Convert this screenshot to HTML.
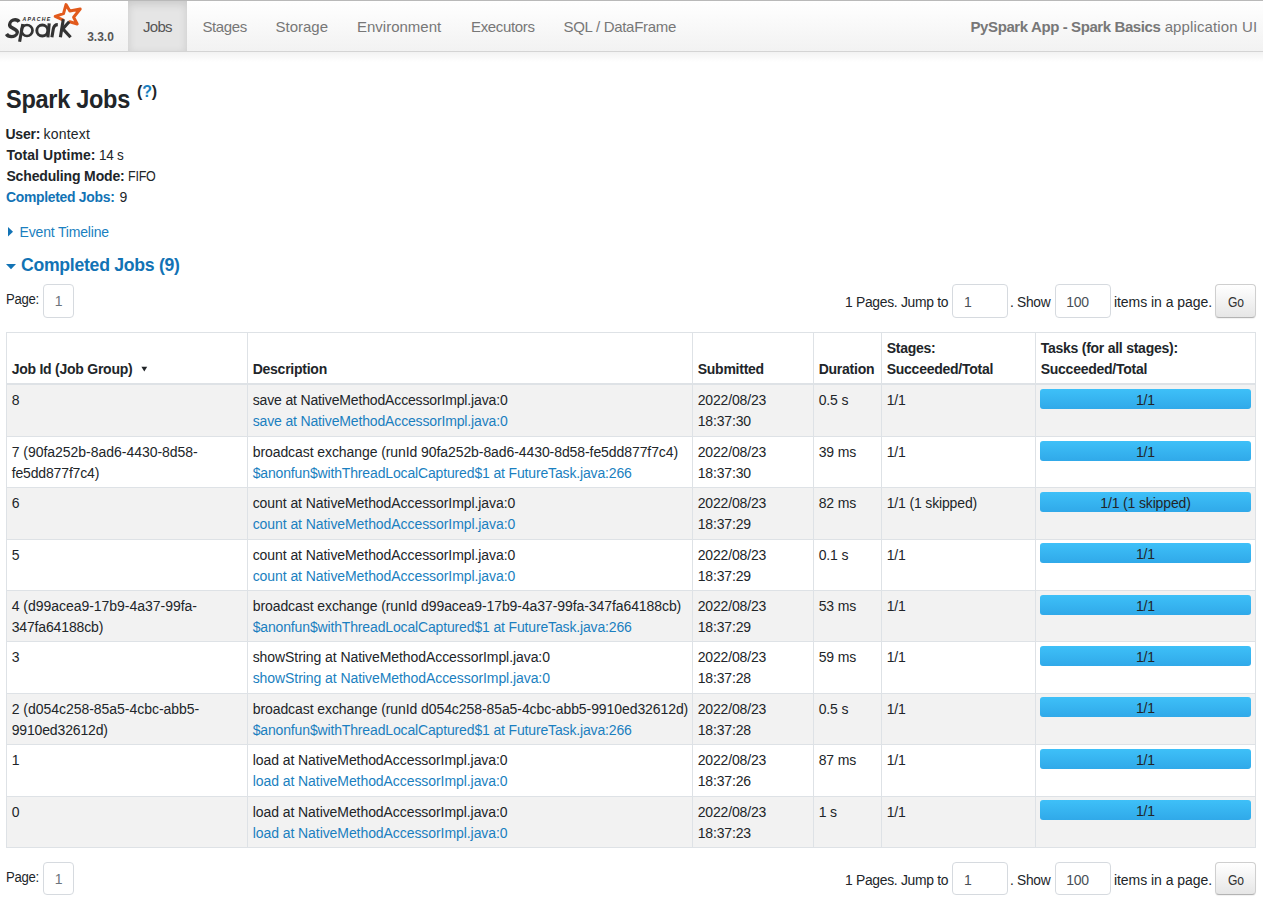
<!DOCTYPE html>
<html><head><meta charset="utf-8">
<style>
html,body{margin:0;padding:0;background:#fff;}
body{width:1263px;height:919px;overflow:hidden;position:relative;font-family:"Liberation Sans",sans-serif;font-size:14px;line-height:21px;color:#212529;}
a{color:#1a7fc0;text-decoration:none;}
.abs{position:absolute;white-space:nowrap;}
.nav{position:absolute;left:0;top:0;width:1263px;height:52px;background:linear-gradient(#ffffff,#f2f2f2);border-top:1px solid #b9b9b9;border-bottom:1px solid #d4d4d4;box-sizing:border-box;}
.navshadow{position:absolute;left:0;top:52px;width:1263px;height:10px;background:linear-gradient(rgba(0,0,0,0.05),rgba(0,0,0,0));}
.tab{position:absolute;top:2px;height:50px;font-size:15px;line-height:50px;color:#777;white-space:nowrap;}
.active{position:absolute;left:128px;top:1px;width:59px;height:50px;background:#e5e5e5;box-shadow:inset 0 3px 8px rgba(0,0,0,0.125);}
.apptitle{position:absolute;top:2px;left:970.5px;height:50px;line-height:50px;font-size:15px;color:#777;white-space:nowrap;}
.pinput{position:absolute;box-sizing:border-box;border:1px solid #d6dadf;border-radius:4px;background:#fff;}
.gobtn{position:absolute;box-sizing:border-box;border:1px solid #cfcfcf;border-bottom-color:#b3b3b3;border-radius:4px;background:linear-gradient(#ffffff,#e6e6e6);box-shadow:0 1px 1px rgba(0,0,0,0.06);}
table.jobs{position:absolute;left:6px;top:332px;border-collapse:collapse;table-layout:fixed;width:1250px;}
table.jobs th, table.jobs td{border:1px solid #dee2e6;padding:5.05px 4.2px 3.35px 4.7px;vertical-align:top;text-align:left;overflow:hidden;white-space:nowrap;line-height:21px;letter-spacing:-0.15px;}
table.jobs th{vertical-align:bottom;border-bottom:2px solid #dee2e6;font-weight:bold;letter-spacing:-0.25px;padding-top:5.2px;padding-bottom:3.2px;}
table.jobs tbody tr:nth-child(odd) td{background:#f2f2f2;}
.prog{position:relative;top:-1.3px;margin-left:-0.5px;height:20px;border-radius:3px;background:linear-gradient(#3ec0f8,#30a9e9);text-align:center;font-size:14px;line-height:22px;color:#212529;overflow:visible;}
</style></head>
<body>
<div class="nav"></div>
<div class="navshadow"></div>
<div class="active"></div>


<svg class="abs" style="left:0;top:0" width="125" height="51" viewBox="0 0 125 51">
 <g fill="none" stroke="#e25a1c" stroke-width="3" stroke-linejoin="round" stroke-linecap="round">
  <polyline points="62.8,19.8 55.2,16.4 63.5,13.6 66.0,4.6 69.8,11.0 80.2,9.0 73.6,17.2 77.2,24.0 69.8,21.8"/>
 </g>
 <g fill="none" stroke="#333" stroke-width="3.1">
  <g transform="translate(0,37) skewX(-10) translate(0,-37)">
  <path stroke-width="3.3" d="M 16.34 21.89 C 15.31 20.50 13.66 19.75 11.81 19.75 C 9.13 19.75 7.38 21.67 7.38 24.13 C 7.38 26.92 10.16 27.66 11.81 28.52 C 13.56 29.48 16.55 30.34 16.55 32.80 C 16.55 35.26 14.28 36.55 11.50 36.55 C 9.13 36.55 7.17 35.69 5.94 33.98"/>
  </g>
  <line x1="19.6" y1="41.8" x2="22.8" y2="24.0"/>
  <circle cx="27.0" cy="30.5" r="5.5" stroke-width="2.7"/>
  <circle cx="42.3" cy="30.55" r="5.5" stroke-width="2.9"/>
  <line x1="49.2" y1="23.4" x2="47.9" y2="37.3"/>
  <path d="M51.9 37.3 L53.3 29.0 C53.9 25.8 55.5 24.6 57.8 24.6"/>
  <line x1="63.3" y1="19.2" x2="60.4" y2="37.3"/>
  <line x1="69.2" y1="21.8" x2="62.3" y2="29.4"/>
  <line x1="62.6" y1="28.6" x2="70.6" y2="37.3"/>
 </g>
 <text x="22.6" y="20.9" font-family="Liberation Sans" font-weight="bold" font-style="italic" font-size="5.2" textLength="27.6" lengthAdjust="spacing" fill="#2a2a2a">APACHE</text>
 <text x="87.2" y="41" font-family="Liberation Sans" font-weight="bold" font-size="13" textLength="26.6" lengthAdjust="spacingAndGlyphs" fill="#555">3.3.0</text>
</svg>


<div class="tab" style="left:143px;color:#555;letter-spacing:-0.7px">Jobs</div>
<div class="tab" style="left:202.5px;letter-spacing:-0.4px">Stages</div>
<div class="tab" style="left:275.5px">Storage</div>
<div class="tab" style="left:357px">Environment</div>
<div class="tab" style="left:471px;letter-spacing:-0.35px">Executors</div>
<div class="tab" style="left:563.5px;letter-spacing:-0.3px">SQL / DataFrame</div>
<div class="apptitle"><b style="letter-spacing:-0.4px">PySpark App - Spark Basics</b> <span style="letter-spacing:0.12px">application UI</span></div>

<div class="abs" style="left:5.86px;top:84px;font-size:25px;line-height:30px;font-weight:700;letter-spacing:-0.300px;transform:scaleX(0.9404);transform-origin:1px 0;">Spark Jobs</div>
<div class="abs" style="left:137px;top:82px;font-size:16px;line-height:20px;font-weight:bold;letter-spacing:-0.2px">(<a>?</a>)</div>
<div class="abs" style="left:5.40px;top:124px;font-size:14px;line-height:21px;font-weight:700;letter-spacing:-0.200px;">User:</div>
<div class="abs" style="left:43.60px;top:124px;font-size:14px;line-height:21px;letter-spacing:0.200px;">kontext</div>
<div class="abs" style="left:6.40px;top:145px;font-size:14px;line-height:21px;font-weight:700;letter-spacing:0.050px;">Total Uptime:</div>
<div class="abs" style="left:98.70px;top:145px;font-size:14px;line-height:21px;letter-spacing:-0.300px;transform:scaleX(0.9668);transform-origin:1px 0;">14 s</div>
<div class="abs" style="left:6.40px;top:166px;font-size:14px;line-height:21px;font-weight:700;letter-spacing:-0.147px;">Scheduling Mode:</div>
<div class="abs" style="left:128.40px;top:166px;font-size:14px;line-height:21px;letter-spacing:-0.300px;transform:scaleX(0.8937);transform-origin:1px 0;">FIFO</div>
<div class="abs" style="left:6.40px;top:187px;font-size:14px;line-height:21px;font-weight:700;letter-spacing:-0.300px;transform:scaleX(0.9945);transform-origin:0px 0;color:#1273b5;">Completed Jobs:</div>
<div class="abs" style="left:119.50px;top:187px;font-size:14px;line-height:21px;">9</div>
<svg class="abs" style="left:8px;top:227px" width="6" height="10"><polygon points="0,0 5,4.8 0,9.6" fill="#1273b5"/></svg>
<div class="abs" style="left:19.60px;top:222px;font-size:14px;line-height:21px;letter-spacing:-0.177px;color:#1a7fc0;">Event Timeline</div>
<svg class="abs" style="left:6px;top:264px" width="11" height="6"><polygon points="0,0 10,0 5,5.3" fill="#1273b5"/></svg>
<div class="abs" style="left:21.40px;top:253px;font-size:18.5px;line-height:24px;font-weight:700;letter-spacing:-0.300px;transform:scaleX(0.9542);transform-origin:0px 0;color:#1273b5;">Completed Jobs (9)</div>
<div class="abs" style="left:5.65px;top:289px;font-size:14px;line-height:21px;letter-spacing:-0.300px;transform:scaleX(0.9364);transform-origin:1px 0;">Page:</div>
<div class="pinput" style="left:43px;top:284px;width:31px;height:34px;"></div>
<div class="abs" style="left:54.70px;top:291px;font-size:14px;line-height:21px;color:#6c757d;">1</div>
<div class="abs" style="left:844.60px;top:292px;font-size:14px;line-height:21px;letter-spacing:-0.300px;transform:scaleX(0.9913);transform-origin:1px 0;">1 Pages. Jump to</div>
<div class="pinput" style="left:952px;top:284px;width:56px;height:34px;"></div>
<div class="abs" style="left:963.90px;top:292px;font-size:14px;line-height:21px;color:#495057;">1</div>
<div class="abs" style="left:1010.40px;top:292px;font-size:14px;line-height:21px;letter-spacing:-0.300px;transform:scaleX(0.9827);transform-origin:1px 0;">. Show</div>
<div class="pinput" style="left:1055px;top:284px;width:56px;height:34px;"></div>
<div class="abs" style="left:1066.30px;top:292px;font-size:14px;line-height:21px;letter-spacing:-0.250px;color:#495057;">100</div>
<div class="abs" style="left:1113.90px;top:292px;font-size:14px;line-height:21px;letter-spacing:-0.040px;">items in a page.</div>
<div class="gobtn" style="left:1215px;top:284px;width:41px;height:34px;"></div>
<div class="abs" style="left:1227.80px;top:292px;font-size:14px;line-height:21px;letter-spacing:-0.300px;transform:scaleX(0.8663);transform-origin:0px 0;color:#333;">Go</div>
<table class="jobs"><colgroup><col style="width:241px"><col style="width:445px"><col style="width:121px"><col style="width:68px"><col style="width:154px"><col style="width:220px"></colgroup>
<thead><tr><th>Job Id (Job Group)</th><th>Description</th><th>Submitted</th><th>Duration</th><th>Stages:<br>Succeeded/Total</th><th>Tasks (for all stages):<br>Succeeded/Total</th></tr></thead><tbody>
<tr><td>8</td><td>save at NativeMethodAccessorImpl.java:0<br><a>save at NativeMethodAccessorImpl.java:0</a></td><td>2022/08/23<br>18:37:30</td><td>0.5 s</td><td>1/1</td><td><div class="prog">1/1</div></td></tr>
<tr><td><span style="letter-spacing:-0.03px">7 (90fa252b-8ad6-4430-8d58-</span><br>fe5dd877f7c4)</td><td><span style="letter-spacing:-0.08px">broadcast exchange (runId 90fa252b-8ad6-4430-8d58-fe5dd877f7c4)</span><br><a>$anonfun$withThreadLocalCaptured$1 at FutureTask.java:266</a></td><td>2022/08/23<br>18:37:30</td><td>39 ms</td><td>1/1</td><td><div class="prog">1/1</div></td></tr>
<tr><td>6</td><td><span style="letter-spacing:-0.07px">count at NativeMethodAccessorImpl.java:0</span><br><a style="letter-spacing:-0.07px">count at NativeMethodAccessorImpl.java:0</a></td><td>2022/08/23<br>18:37:29</td><td>82 ms</td><td>1/1 (1 skipped)</td><td><div class="prog">1/1 (1 skipped)</div></td></tr>
<tr><td>5</td><td><span style="letter-spacing:-0.07px">count at NativeMethodAccessorImpl.java:0</span><br><a style="letter-spacing:-0.07px">count at NativeMethodAccessorImpl.java:0</a></td><td>2022/08/23<br>18:37:29</td><td>0.1 s</td><td>1/1</td><td><div class="prog">1/1</div></td></tr>
<tr><td><span style="letter-spacing:-0.03px">4 (d99acea9-17b9-4a37-99fa-</span><br>347fa64188cb)</td><td><span style="letter-spacing:-0.08px">broadcast exchange (runId d99acea9-17b9-4a37-99fa-347fa64188cb)</span><br><a>$anonfun$withThreadLocalCaptured$1 at FutureTask.java:266</a></td><td>2022/08/23<br>18:37:29</td><td>53 ms</td><td>1/1</td><td><div class="prog">1/1</div></td></tr>
<tr><td>3</td><td><span style="letter-spacing:-0.07px">showString at NativeMethodAccessorImpl.java:0</span><br><a style="letter-spacing:-0.07px">showString at NativeMethodAccessorImpl.java:0</a></td><td>2022/08/23<br>18:37:28</td><td>59 ms</td><td>1/1</td><td><div class="prog">1/1</div></td></tr>
<tr><td><span style="letter-spacing:-0.03px">2 (d054c258-85a5-4cbc-abb5-</span><br>9910ed32612d)</td><td><span style="letter-spacing:-0.08px">broadcast exchange (runId d054c258-85a5-4cbc-abb5-9910ed32612d)</span><br><a>$anonfun$withThreadLocalCaptured$1 at FutureTask.java:266</a></td><td>2022/08/23<br>18:37:28</td><td>0.5 s</td><td>1/1</td><td><div class="prog">1/1</div></td></tr>
<tr><td>1</td><td><span style="letter-spacing:-0.07px">load at NativeMethodAccessorImpl.java:0</span><br><a style="letter-spacing:-0.07px">load at NativeMethodAccessorImpl.java:0</a></td><td>2022/08/23<br>18:37:26</td><td>87 ms</td><td>1/1</td><td><div class="prog">1/1</div></td></tr>
<tr><td>0</td><td><span style="letter-spacing:-0.07px">load at NativeMethodAccessorImpl.java:0</span><br><a style="letter-spacing:-0.07px">load at NativeMethodAccessorImpl.java:0</a></td><td>2022/08/23<br>18:37:23</td><td>1 s</td><td>1/1</td><td><div class="prog">1/1</div></td></tr>
</tbody></table>
<svg class="abs" style="left:141px;top:366px" width="7" height="6"><polygon points="0.4,0.8 6.2,0.8 3.3,5.4" fill="#212529"/></svg>
<div class="abs" style="left:5.65px;top:867px;font-size:14px;line-height:21px;letter-spacing:-0.300px;transform:scaleX(0.9364);transform-origin:1px 0;">Page:</div>
<div class="pinput" style="left:43px;top:862px;width:31px;height:33px;"></div>
<div class="abs" style="left:54.70px;top:869px;font-size:14px;line-height:21px;color:#6c757d;">1</div>
<div class="abs" style="left:844.60px;top:870px;font-size:14px;line-height:21px;letter-spacing:-0.300px;transform:scaleX(0.9913);transform-origin:1px 0;">1 Pages. Jump to</div>
<div class="pinput" style="left:952px;top:862px;width:56px;height:33px;"></div>
<div class="abs" style="left:963.90px;top:870px;font-size:14px;line-height:21px;color:#495057;">1</div>
<div class="abs" style="left:1010.40px;top:870px;font-size:14px;line-height:21px;letter-spacing:-0.300px;transform:scaleX(0.9827);transform-origin:1px 0;">. Show</div>
<div class="pinput" style="left:1055px;top:862px;width:56px;height:33px;"></div>
<div class="abs" style="left:1066.30px;top:870px;font-size:14px;line-height:21px;letter-spacing:-0.250px;color:#495057;">100</div>
<div class="abs" style="left:1113.90px;top:870px;font-size:14px;line-height:21px;letter-spacing:-0.040px;">items in a page.</div>
<div class="gobtn" style="left:1215px;top:862px;width:41px;height:33px;"></div>
<div class="abs" style="left:1227.80px;top:870px;font-size:14px;line-height:21px;letter-spacing:-0.300px;transform:scaleX(0.8663);transform-origin:0px 0;color:#333;">Go</div>
</body></html>
